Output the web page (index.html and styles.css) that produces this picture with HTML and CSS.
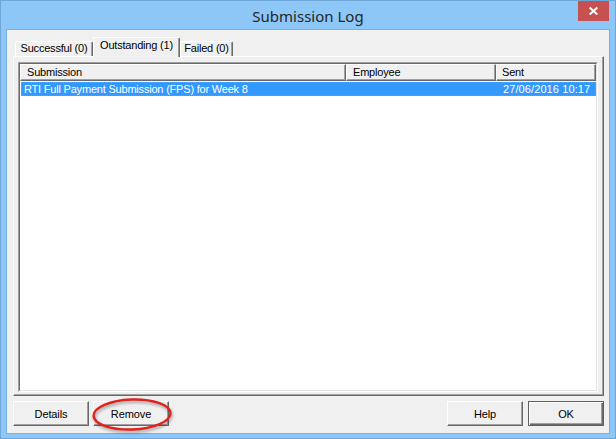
FILE: index.html
```html
<!DOCTYPE html>
<html>
<head>
<meta charset="utf-8">
<title>Submission Log</title>
<link rel="stylesheet" href="styles.css">
</head>
<body>
<div class="window">
  <div class="titlebar">
    <div class="title">Submission Log</div>
    <div class="close">
      <svg width="9" height="8" viewBox="0 0 9 8"><path d="M0.7 0.5 L8.3 7.5 M8.3 0.5 L0.7 7.5" stroke="#fff" stroke-width="2" fill="none"/></svg>
    </div>
  </div>
  <div class="client">
    <div class="tabs">
      <div class="tab t-succ">Successful (0)</div>
      <div class="tab t-out active">Outstanding (1)</div>
      <div class="tab t-fail">Failed (0)</div>
    </div>
    <div class="panel">
      <div class="list">
        <div class="list-inner">
          <div class="header">
            <div class="hcell">Submission</div>
            <div class="hcell">Employee</div>
            <div class="hcell">Sent</div>
          </div>
          <div class="item selected">
            <span class="cell c1">RTI Full Payment Submission (FPS) for Week 8</span>
            <span class="cell c2"></span>
            <span class="cell c3">27/06/2016 10:17</span>
          </div>
        </div>
      </div>
    </div>
    <div class="buttons">
      <button class="btn">Details</button>
      <button class="btn remove">Remove
        <svg class="mark" width="84" height="38" viewBox="0 0 84 38"><ellipse cx="42" cy="18.5" rx="38.5" ry="15" transform="rotate(-2 42 18.5)" fill="none" stroke="#e3201b" stroke-width="2.4"/></svg>
      </button>
      <span class="spacer"></span>
      <button class="btn">Help</button>
      <button class="btn default">OK</button>
    </div>
  </div>
</div>
</body>
</html>
```
FILE: styles.css
```css
* { box-sizing: border-box; }
html, body { margin: 0; padding: 0; }
body {
  width: 616px;
  height: 439px;
  overflow: hidden;
  font-family: "Liberation Sans", Arial, sans-serif;
  font-size: 11px;
  color: #000;
}
.window {
  width: 616px;
  height: 439px;
  background: #8cc7f8;
  border: 1px solid #6ea6d8;
  padding: 0 5px 4px 5px;
  display: flex;
  flex-direction: column;
}
.titlebar {
  height: 28px;
  display: grid;
  grid-template-columns: 1fr auto 1fr;
  align-items: start;
}
.title {
  grid-column: 2;
  font-family: "Noto Sans", "Open Sans", sans-serif;
  font-size: 15px;
  line-height: 20px;
  padding-top: 5px;
  color: #262626;
}
.close {
  grid-column: 3;
  justify-self: end;
  width: 31px;
  height: 20px;
  margin-right: 1px;
  background: #c75050;
  display: flex;
  align-items: center;
  justify-content: center;
}
.close svg { display: block; }
.client {
  flex: 1;
  background: #f0f0f0;
  border: 1px solid #79b0e2;
  padding: 7px 5px 0 6px;
  display: flex;
  flex-direction: column;
}
.tabs {
  height: 19px;
  display: flex;
  align-items: flex-end;
  padding-left: 2px;
  position: relative;
  z-index: 2;
}
.tab {
  height: 15px;
  line-height: 12px;
  text-align: center;
  white-space: nowrap;
  background: #f0f0f0;
  border-top: 1px solid #fff;
  border-left: 1px solid #fff;
  border-right: 1px solid #696969;
  box-shadow: inset -1px 0 0 #a0a0a0;
  border-radius: 2px 2px 0 0;
  letter-spacing: -0.2px;
}
.t-succ { width: 78px; }
.t-out { width: 87px; }
.t-fail { width: 53px; }
.tab.active {
  height: 20px;
  margin-bottom: -1px;
  line-height: 14px;
}
.panel {
  height: 340px;
  border-top: 1px solid #fff;
  border-left: 1px solid #fff;
  border-right: 1px solid #696969;
  border-bottom: 1px solid #696969;
  box-shadow: inset -1px -1px 0 #a0a0a0;
  padding: 5px 5px 3px 4px;
  display: flex;
}
.list {
  flex: 1;
  border: 1px solid;
  border-color: #a0a0a0 #fff #fff #a0a0a0;
  display: flex;
}
.list-inner {
  flex: 1;
  border: 1px solid;
  border-color: #696969 #e3e3e3 #e3e3e3 #696969;
  background: #fff;
  display: flex;
  flex-direction: column;
}
.header {
  height: 17px;
  display: grid;
  grid-template-columns: 326px 150px 100px;
}
.hcell {
  background: #f0f0f0;
  border-top: 1px solid #fff;
  border-left: 1px solid #fff;
  border-right: 1px solid #696969;
  border-bottom: 1px solid #696969;
  box-shadow: inset -1px -1px 0 #a0a0a0;
  padding-left: 6px;
  line-height: 14px;
  letter-spacing: -0.2px;
}
.hcell:nth-child(3) { padding-left: 5px; }
.item {
  margin: 1px 0 0 1px;
  height: 14px;
  display: grid;
  grid-template-columns: 324px 150px 1fr;
  line-height: 12px;
  white-space: nowrap;
}
.item.selected {
  background: #3399ff;
  color: #fff;
  border: 1px dotted #e0832a;
}
.cell { overflow: hidden; letter-spacing: -0.2px; }
.c1 { padding-left: 2px; }
.c3 { padding-left: 7px; letter-spacing: 0.1px; }
.buttons {
  margin-top: 5px;
  height: 25px;
  display: flex;
}
.spacer { flex: 1; }
.btn {
  width: 76px;
  height: 25px;
  padding: 0;
  margin: 0;
  background: #f0f0f0;
  border: 1px solid;
  border-color: #fff #696969 #696969 #fff;
  box-shadow: inset -1px -1px 0 #a0a0a0;
  font-family: "Liberation Sans", Arial, sans-serif;
  font-size: 11px;
  color: #000;
  display: flex;
  align-items: center;
  justify-content: center;
  letter-spacing: -0.1px;
}
.btn + .btn { margin-left: 4px; }
.btn.default {
  margin-left: 5px;
  border: 1px solid #5f5f5f;
  box-shadow: inset 1px 1px 0 #fff, inset -1px -1px 0 #696969, inset -2px -2px 0 #a0a0a0;
}
.remove { position: relative; }
.mark {
  position: absolute;
  left: -4px;
  top: -6px;
  pointer-events: none;
  filter: drop-shadow(1px 2px 1.5px rgba(0,0,0,0.35));
}
```
